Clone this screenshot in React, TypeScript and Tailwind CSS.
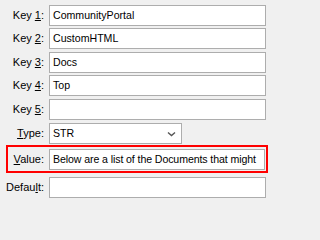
import React from "react";

const labelCls = "shrink-0 text-right text-black leading-none";
const boxCls =
  "h-[21px] border border-[#adadad] bg-white flex items-center px-[3px] text-black text-[10.6px] leading-none whitespace-nowrap overflow-hidden";

function Row({
  pre,
  mark,
  post,
  value,
  className = "",
}: {
  pre: string;
  mark: string;
  post: string;
  value?: string;
  className?: string;
}) {
  return (
    <div className={`flex items-center ${className}`}>
      <div className={`${labelCls} w-[44px]`}>
        {pre}
        <u>{mark}</u>
        {post}
      </div>
      <div className={`${boxCls} ml-[5px] w-[217px]`}>{value}</div>
    </div>
  );
}

export default function App() {
  return (
    <div className="w-full min-w-[271px] h-screen min-h-[202px] bg-[#f0f0f0] pt-[5px] font-['Liberation_Sans',Arial,sans-serif] text-[11px] overflow-hidden">
      <Row pre="Key " mark="1" post=":" value="CommunityPortal" />
      <Row pre="Key " mark="2" post=":" value="CustomHTML" className="mt-[2px]" />
      <Row pre="Key " mark="3" post=":" value="Docs" className="mt-[3px]" />
      <Row pre="Key " mark="4" post=":" value="Top" className="mt-[2px]" />
      <Row pre="Key " mark="5" post=":" className="mt-[3px]" />

      <div className="flex items-center mt-[3px]">
        <div className={`${labelCls} w-[44px]`}>
          <u>T</u>ype:
        </div>
        <div className={`${boxCls} ml-[5px] w-[133px] justify-between`}>
          <span>STR</span>
          <svg width="9" height="6" viewBox="0 0 9 6" className="mr-[2px]">
            <path d="M1 1.5 L4.5 4.5 L8 1.5" fill="none" stroke="#555" strokeWidth="1.4" />
          </svg>
        </div>
      </div>

      <div className="ml-[6px] mt-[1px] w-[262px] h-[28px] border-2 border-[#ff0000] flex items-center">
        <div className={`${labelCls} w-[36px]`}>
          <u>V</u>alue:
        </div>
        <div className={`${boxCls} ml-[5px] w-[216px] tracking-[-0.1px]`}>
          Below are a list of the Documents that might
        </div>
      </div>

      <div className="flex items-center mt-[4px]">
        <div className={`${labelCls} w-[44px]`}>
          Defau<u>l</u>t:
        </div>
        <div className={`${boxCls} ml-[5px] w-[217px]`} />
      </div>
    </div>
  );
}
